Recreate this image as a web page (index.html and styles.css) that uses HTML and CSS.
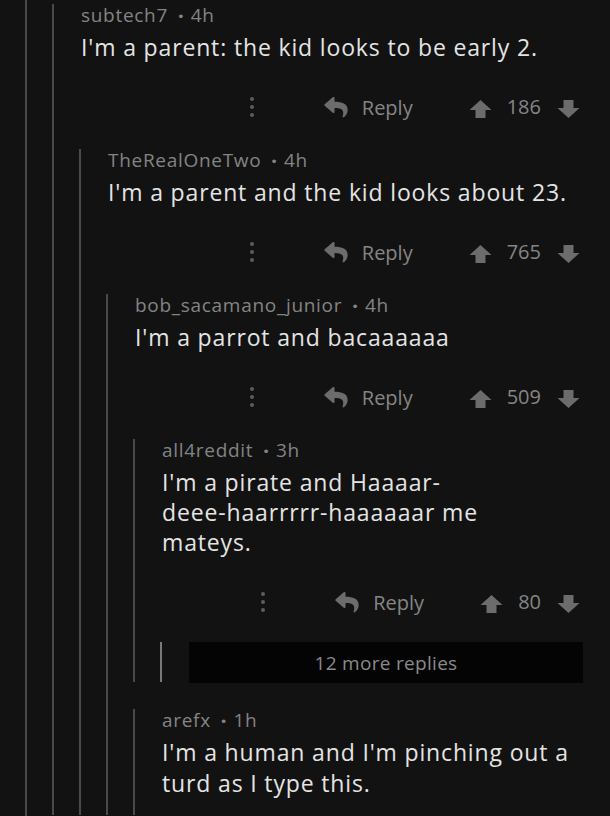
FILE: index.html
```html
<!DOCTYPE html>
<html>
<head>
<meta charset="utf-8">
<link rel="stylesheet" href="styles.css">
</head>
<body>
<svg width="0" height="0" class="defs">
  <defs>
    <symbol id="i-reply" viewBox="0 0 512 460">
      <path d="M8.3 157.8L184.3 5.9C199.7-7.5 224 3.3 224 24v80c160.6 1.9 288 34 288 186.3 0 61.4-39.6 122.3-83.3 154.1-13.7 9.9-33.1-2.5-28.1-18.6 45.3-145-21.5-183.5-176.6-185.7V328c0 20.7-24.3 31.5-39.7 18.2l-176-152c-11.1-9.6-11.1-26.8 0-36.4z"/>
    </symbol>
    <symbol id="i-up" viewBox="0 0 22 18">
      <path d="M11 0 L22 10 H16 V18 H6 V10 H0 Z"/>
    </symbol>
    <symbol id="i-down" viewBox="0 0 22 18">
      <path d="M6 0 H16 V8 H22 L11 18 L0 8 H6 Z"/>
    </symbol>
  </defs>
</svg>
<div class="thread">
  <div class="comment">
    <div class="head"><span>subtech7</span><span class="sep">•</span><span>4h</span></div>
    <div class="text">I'm a parent: the kid looks to be early 2.</div>
    <div class="actions">
      <span class="dots"><i></i><i></i><i></i></span>
      <svg class="ic-reply"><use href="#i-reply"/></svg>
      <span class="reply">Reply</span>
      <svg class="ic-vote"><use href="#i-up"/></svg>
      <span class="score">186</span>
      <svg class="ic-vote down"><use href="#i-down"/></svg>
    </div>
    <div class="children">
      <div class="comment">
        <div class="head"><span>TheRealOneTwo</span><span class="sep">•</span><span>4h</span></div>
        <div class="text">I'm a parent and the kid looks about 23.</div>
        <div class="actions">
          <span class="dots"><i></i><i></i><i></i></span>
          <svg class="ic-reply"><use href="#i-reply"/></svg>
          <span class="reply">Reply</span>
          <svg class="ic-vote"><use href="#i-up"/></svg>
          <span class="score">765</span>
          <svg class="ic-vote down"><use href="#i-down"/></svg>
        </div>
        <div class="children">
          <div class="comment">
            <div class="head"><span>bob_sacamano_junior</span><span class="sep">•</span><span>4h</span></div>
            <div class="text">I'm a parrot and bacaaaaaa</div>
            <div class="actions">
              <span class="dots"><i></i><i></i><i></i></span>
              <svg class="ic-reply"><use href="#i-reply"/></svg>
              <span class="reply">Reply</span>
              <svg class="ic-vote"><use href="#i-up"/></svg>
              <span class="score">509</span>
              <svg class="ic-vote down"><use href="#i-down"/></svg>
            </div>
            <div class="children">
              <div class="comment">
                <div class="head"><span>all4reddit</span><span class="sep">•</span><span>3h</span></div>
                <div class="text">I'm a pirate and Haaaar-<br>deee-haarrrrr-haaaaaar me<br>mateys.</div>
                <div class="actions">
                  <span class="dots"><i></i><i></i><i></i></span>
                  <svg class="ic-reply"><use href="#i-reply"/></svg>
                  <span class="reply">Reply</span>
                  <svg class="ic-vote"><use href="#i-up"/></svg>
                  <span class="score">80</span>
                  <svg class="ic-vote down"><use href="#i-down"/></svg>
                </div>
                <div class="children">
                  <div class="more">
                    <div class="more-box">12 more replies</div>
                  </div>
                </div>
              </div>
              <div class="comment sibling">
                <div class="head"><span>arefx</span><span class="sep">•</span><span>1h</span></div>
                <div class="text">I'm a human and I'm pinching out a<br>turd as I type this.</div>
              </div>
            </div>
          </div>
        </div>
      </div>
    </div>
  </div>
</div>
</body>
</html>
```

FILE: styles.css
```css
html, body {
  margin: 0;
  padding: 0;
  background: #121212;
  height: 816px;
  overflow: hidden;
}

body {
  font-family: "Open Sans", "Noto Sans", sans-serif;
  color: #dcdcdc;
}

.defs {
  position: absolute;
  width: 0;
  height: 0;
}

.thread {
  margin-left: 25px;
  margin-right: 27px;
  border-left: 2px solid #4a4a4a;
  padding-left: 25px;
  height: 816px;
  box-sizing: border-box;
  overflow: hidden;
}

.comment {
  border-left: 2px solid #4a4a4a;
  margin-top: 4px;
}

.children > .comment {
  margin-top: 22px;
}

.children > .comment.sibling {
  margin-top: 27px;
  padding-bottom: 16px;
}

.children {
  padding-left: 25px;
}

.head,
.text,
.actions {
  padding-left: 27px;
}

.head {
  font-size: 19px;
  letter-spacing: 0.7px;
  line-height: 22px;
  height: 22px;
  color: #848484;
  display: flex;
  align-items: center;
}

.sep {
  font-family: "DejaVu Sans", sans-serif;
  font-size: 13px;
  line-height: 1;
  letter-spacing: 0;
  margin: 0 6px 0 9px;
  padding-top: 2px;
}

.text {
  font-size: 23px;
  letter-spacing: 0.85px;
  line-height: 30px;
  margin-top: 6px;
  color: #e4e4e4;
}

.sibling .text {
  line-height: 31px;
}

.actions {
  display: flex;
  justify-content: flex-end;
  align-items: center;
  height: 40px;
  margin-top: 25px;
  padding-right: 3px;
  color: #858585;
  font-size: 20px;
}

.dots {
  display: flex;
  flex-direction: column;
  gap: 4px;
  margin-right: 70px;
}

.dots i {
  display: block;
  width: 4px;
  height: 4px;
  border-radius: 50%;
  background: #5e5e5e;
}

.ic-reply {
  flex-shrink: 0;
  width: 24px;
  height: 21px;
  fill: #6c6c6c;
  margin-right: 14px;
}

.reply {
  margin-right: 56px;
}

.ic-vote {
  flex-shrink: 0;
  width: 23px;
  height: 18px;
  fill: #6c6c6c;
  margin-top: 4px;
  margin-right: 15px;
}

.ic-vote.down {
  margin-right: 0;
  margin-left: 16px;
}

.score {
  line-height: 1;
}

.more {
  margin-top: 21px;
  border-left: 2px solid #7a7a7a;
  padding-left: 27px;
  height: 40px;
}

.more-box {
  height: 41px;
  margin-top: -1px;
  background: #040404;
  color: #8a8a8a;
  font-size: 19px;
  letter-spacing: 0.3px;
  display: flex;
  align-items: center;
  justify-content: center;
}
```
